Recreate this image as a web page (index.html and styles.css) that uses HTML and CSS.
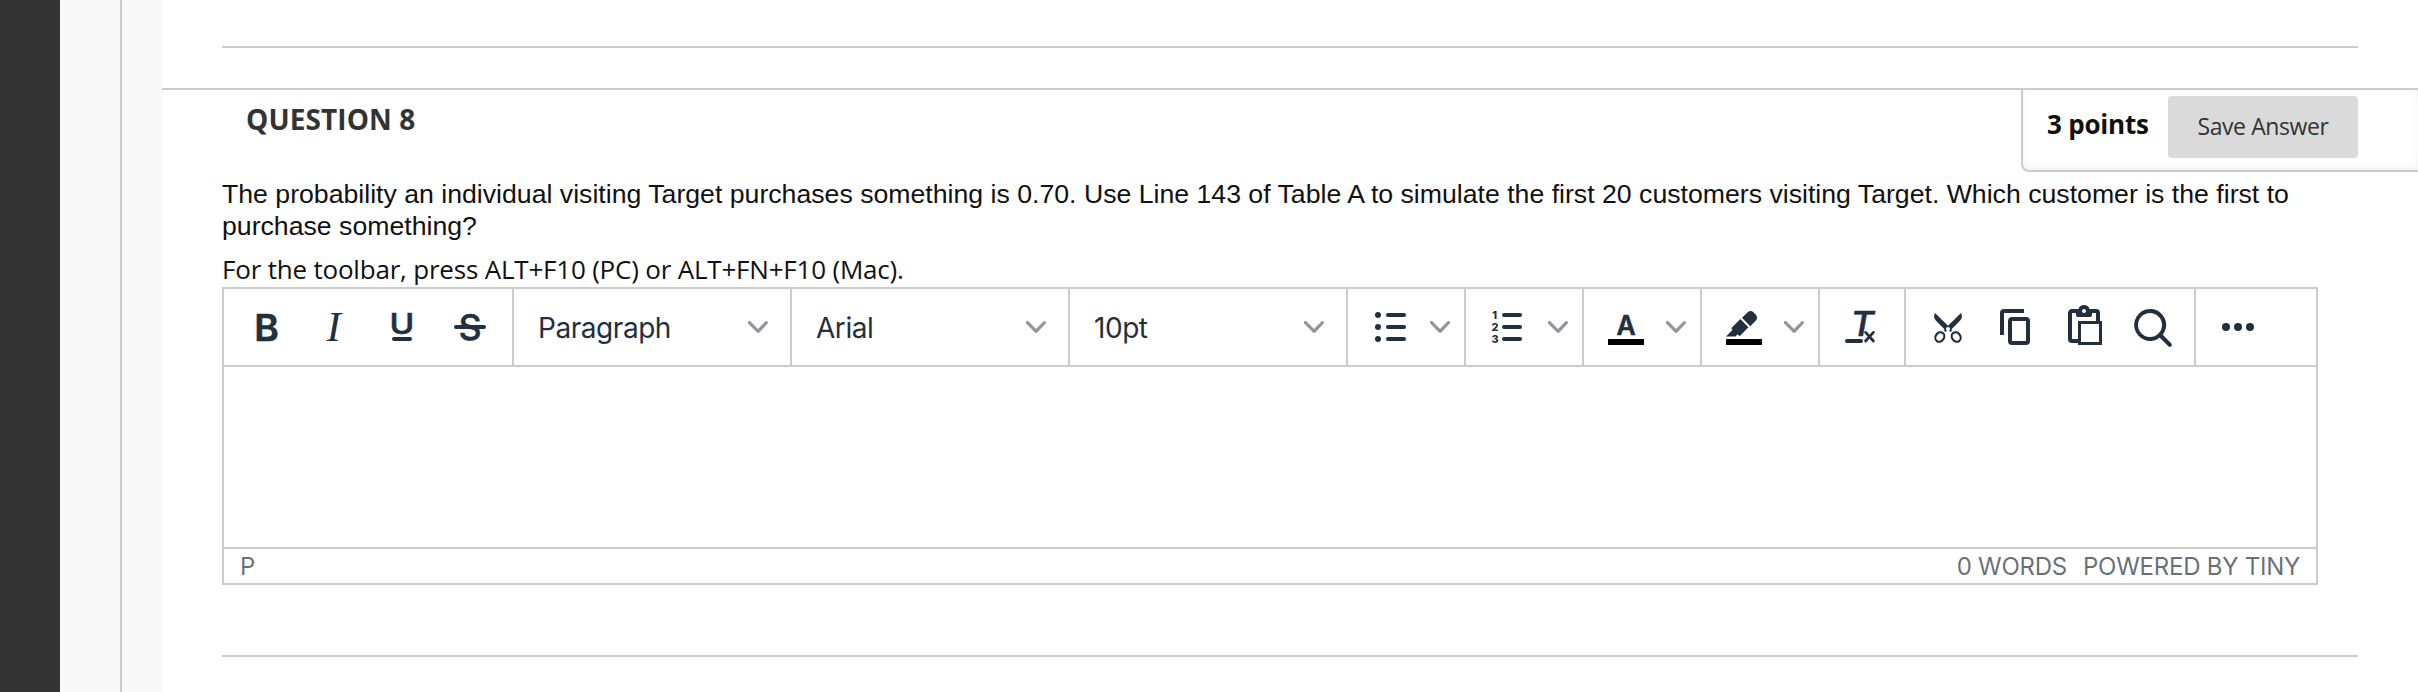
FILE: index.html
```
<!DOCTYPE html>
<html lang="en">
    <head>
        <meta charset="UTF-8">
        <meta name="viewport" content="width=device-width, initial-scale=1.0">
        <title>Take Test</title>
        <link rel="stylesheet" href="styles.css">
    </head>
    <body>
        <div class="page">
            <div class="side-dark"></div>
            <div class="side-light"></div>
            <div class="side-gap"></div>

            <div class="content">
                <hr class="divider divider-top">

                <div class="question">
                    <div class="question-header">
                        <h3>QUESTION 8</h3>
                        <div class="points-box">
                            <span class="points">3 points</span>
                            <button class="btn-save">Save Answer</button>
                        </div>
                    </div>

                    <p class="question-text">The probability an individual visiting Target purchases something is 0.70. Use Line 143 of Table A to simulate the first 20 customers visiting Target. Which customer is the first to<br>purchase something?</p>
                    <p class="toolbar-help">For the toolbar, press ALT+F10 (PC) or ALT+FN+F10 (Mac).</p>

                    <div class="editor">
                        <div class="toolbar">
                            <div class="group">
                                <button class="tool"><svg class="icon" viewBox="0 0 24 24"><text class="letter-b" x="6.1" y="18.8" textLength="12.3" lengthAdjust="spacingAndGlyphs">B</text></svg></button>
                                <button class="tool"><svg class="icon" viewBox="0 0 24 24"><text class="letter-i" x="8.2" y="19">I</text></svg></button>
                                <button class="tool"><svg class="icon" viewBox="0 0 24 24"><text class="letter-u" x="5.8" y="15.6" textLength="12.4" lengthAdjust="spacingAndGlyphs">U</text><rect x="7" y="17" width="10" height="2" rx="1"/></svg></button>
                                <button class="tool"><svg class="icon" viewBox="0 0 24 24"><text class="letter-s" x="6.2" y="18.6" textLength="11.6" lengthAdjust="spacingAndGlyphs">S</text><rect x="4" y="11" width="16" height="2" rx="1"/></svg></button>
                            </div>
                            <div class="group">
                                <button class="select"><span>Paragraph</span><svg class="chevron" viewBox="0 0 10 10"><path d="M8.7 2.2c.3-.3.8-.3 1 0 .4.4.4.9 0 1.2L5.7 7.8c-.3.3-.9.3-1.2 0L.2 3.4a.8.8 0 010-1.2c.3-.3.8-.3 1.1 0L5 6l3.7-3.8z"/></svg></button>
                            </div>
                            <div class="group">
                                <button class="select"><span>Arial</span><svg class="chevron" viewBox="0 0 10 10"><path d="M8.7 2.2c.3-.3.8-.3 1 0 .4.4.4.9 0 1.2L5.7 7.8c-.3.3-.9.3-1.2 0L.2 3.4a.8.8 0 010-1.2c.3-.3.8-.3 1.1 0L5 6l3.7-3.8z"/></svg></button>
                            </div>
                            <div class="group">
                                <button class="select"><span>10pt</span><svg class="chevron" viewBox="0 0 10 10"><path d="M8.7 2.2c.3-.3.8-.3 1 0 .4.4.4.9 0 1.2L5.7 7.8c-.3.3-.9.3-1.2 0L.2 3.4a.8.8 0 010-1.2c.3-.3.8-.3 1.1 0L5 6l3.7-3.8z"/></svg></button>
                            </div>
                            <div class="group">
                                <button class="tool"><svg class="icon" viewBox="0 0 24 24"><circle cx="6" cy="6" r="1.5"/><circle cx="6" cy="12" r="1.5"/><circle cx="6" cy="18" r="1.5"/><rect x="10" y="5" width="10" height="2" rx="1"/><rect x="10" y="11" width="10" height="2" rx="1"/><rect x="10" y="17" width="10" height="2" rx="1"/></svg></button>
                                <button class="arrow"><svg class="chevron" viewBox="0 0 10 10"><path d="M8.7 2.2c.3-.3.8-.3 1 0 .4.4.4.9 0 1.2L5.7 7.8c-.3.3-.9.3-1.2 0L.2 3.4a.8.8 0 010-1.2c.3-.3.8-.3 1.1 0L5 6l3.7-3.8z"/></svg></button>
                            </div>
                            <div class="group">
                                <button class="tool"><svg class="icon" viewBox="0 0 24 24"><text class="digit" x="4.1" y="8">1</text><text class="digit" x="3.7" y="14">2</text><text class="digit" x="3.7" y="20">3</text><rect x="9" y="5" width="10" height="2" rx="1"/><rect x="9" y="11" width="10" height="2" rx="1"/><rect x="9" y="17" width="10" height="2" rx="1"/></svg></button>
                                <button class="arrow"><svg class="chevron" viewBox="0 0 10 10"><path d="M8.7 2.2c.3-.3.8-.3 1 0 .4.4.4.9 0 1.2L5.7 7.8c-.3.3-.9.3-1.2 0L.2 3.4a.8.8 0 010-1.2c.3-.3.8-.3 1.1 0L5 6l3.7-3.8z"/></svg></button>
                            </div>
                            <div class="group">
                                <button class="tool"><svg class="icon" viewBox="0 0 24 24"><text class="letter-a" x="7.2" y="15.9" textLength="9.6" lengthAdjust="spacingAndGlyphs">A</text><rect class="swatch" x="3" y="18" width="18" height="3"/></svg></button>
                                <button class="arrow"><svg class="chevron" viewBox="0 0 10 10"><path d="M8.7 2.2c.3-.3.8-.3 1 0 .4.4.4.9 0 1.2L5.7 7.8c-.3.3-.9.3-1.2 0L.2 3.4a.8.8 0 010-1.2c.3-.3.8-.3 1.1 0L5 6l3.7-3.8z"/></svg></button>
                            </div>
                            <div class="group">
                                <button class="tool"><svg class="icon" viewBox="0 0 24 24"><path d="M7.7 16.7H3l3.3-3.3-.7-.8L10.2 8l4 4.1-4 4.2c-.2.2-.6.2-.8 0l-.6-.7-1.1 1.1zm3.3-9.3l3-2.9a2 2 0 012.6 0L18 6c.7.7.7 2 0 2.7l-2.9 2.9L11 7.4z"/><rect class="swatch" x="3" y="18" width="18" height="3"/></svg></button>
                                <button class="arrow"><svg class="chevron" viewBox="0 0 10 10"><path d="M8.7 2.2c.3-.3.8-.3 1 0 .4.4.4.9 0 1.2L5.7 7.8c-.3.3-.9.3-1.2 0L.2 3.4a.8.8 0 010-1.2c.3-.3.8-.3 1.1 0L5 6l3.7-3.8z"/></svg></button>
                            </div>
                            <div class="group">
                                <button class="tool"><svg class="icon" viewBox="0 0 24 24"><text class="letter-t" x="6.2" y="16.5" textLength="11.8" lengthAdjust="spacingAndGlyphs">T</text><rect x="3.500" y="18" width="9" height="2" rx="1"/><path class="line" d="M13.800 14.700l3.900 4.300M17.700 14.700l-3.900 4.300"/></svg></button>
                            </div>
                            <div class="group">
                                <button class="tool"><svg class="icon" viewBox="0 0 24 24"><path d="M5.500 5L12 11.400 18.500 5c.7 1.300.6 2.700-.4 3.800L14 12.900l-.4 1.600-1.600-.7-1.600.7-.4-1.600-4.100-4.100C4.900 7.700 4.800 6.300 5.500 5z"/><circle class="hole" cx="12" cy="13" r="1"/><ellipse class="ring" cx="7.900" cy="17" rx="2.100" ry="2.500" transform="rotate(35 7.900 17)"/><ellipse class="ring" cx="16.100" cy="17" rx="2.100" ry="2.500" transform="rotate(-35 16.100 17)"/></svg></button>
                                <button class="tool"><svg class="icon" viewBox="0 0 24 24"><path d="M16 3H6a2 2 0 00-2 2v11h2V5h10V3zm1 4a2 2 0 012 2v10a2 2 0 01-2 2h-7a2 2 0 01-2-2V9c0-1.200.9-2 2-2h7zm0 12V9h-7v10h7z"/></svg></button>
                                <button class="tool"><svg class="icon" viewBox="0 0 24 24"><path d="M18 9V5h-2v1c0 .6-.4 1-1 1H9a1 1 0 01-1-1V5H6v13h3V9h9zM9 20H6a2 2 0 01-2-2V5c0-1.100.9-2 2-2h3.200A3 3 0 0112 1a3 3 0 012.800 2H18a2 2 0 012 2v4h1v12H9v-1zm1.500-9.500v9h9v-9h-9zM12 3a1 1 0 00-1 1c0 .5.4 1 1 1s1-.5 1-1-.4-1-1-1z"/></svg></button>
                                <button class="tool"><svg class="icon" viewBox="0 0 24 24"><path d="M16 17.300a8 8 0 111.400-1.400l4.300 4.400a1 1 0 01-1.400 1.400l-4.400-4.300zm-5-.3a6 6 0 100-12 6 6 0 000 12z"/></svg></button>
                            </div>
                            <div class="group">
                                <button class="tool"><svg class="icon" viewBox="0 0 24 24"><circle cx="6" cy="12" r="2"/><circle cx="12" cy="12" r="2"/><circle cx="18" cy="12" r="2"/></svg></button>
                            </div>
                        </div>
                        <div class="edit-area"></div>
                        <div class="statusbar">
                            <span class="path">P</span>
                            <span class="words">0 words</span>
                            <span class="powered">Powered by Tiny</span>
                        </div>
                    </div>
                </div>

                <hr class="divider">
            </div>
        </div>
    </body>
</html>
```
FILE: styles.css
```
* {
    margin: 0;
    padding: 0;
    box-sizing: border-box;
}

body {
    background-color: #fff;
    font-family: "Open Sans", sans-serif;
    color: #111;
    overflow: hidden;
}

button {
    border: none;
    background: none;
    font-family: inherit;
    cursor: pointer;
}

.page {
    display: flex;
    height: 692px;
}

.side-dark {
    width: 60px;
    background-color: #333;
}

.side-light {
    width: 62px;
    background-color: #f8f8f8;
    border-right: 2px solid #ccc;
}

.side-gap {
    width: 40px;
    background-color: #f8f8f8;
}

.content {
    flex: 1;
}

.divider {
    height: 2px;
    border: none;
    background-color: #ccc;
    margin: 70px 60px 0;
}

.divider-top {
    margin: 46px 60px 40px;
}

.question {
    border-top: 2px solid #ccc;
}

.question-header {
    display: flex;
    justify-content: space-between;
    align-items: flex-start;
    height: 82px;
}

h3 {
    padding: 9px 0 0 84px;
    font-size: 28px;
    line-height: 40px;
    font-weight: bold;
    letter-spacing: 0.1px;
    color: #333;
}

.points-box {
    display: flex;
    align-items: flex-start;
    width: 397px;
    height: 82px;
    padding-left: 24px;
    border-left: 2px solid #ccc;
    border-bottom: 2px solid #ccc;
    border-bottom-left-radius: 8px;
    box-shadow: inset 0 -2px 10px rgba(0,0,0,0.05);
}

.points {
    width: 121px;
    padding-top: 16px;
    font-size: 26px;
    line-height: 36px;
    font-weight: bold;
    letter-spacing: -0.2px;
}

.btn-save {
    width: 190px;
    height: 62px;
    margin-top: 6px;
    padding-bottom: 2px;
    border-radius: 4px;
    background-color: #dadada;
    color: #333;
    font-size: 23px;
    letter-spacing: -0.4px;
}

.question-text {
    margin: 6px 0 9px 60px;
    font-family: "Liberation Sans", Arial, sans-serif;
    font-size: 26.67px;
    line-height: 32px;
    white-space: nowrap;
}

.toolbar-help {
    margin-left: 60px;
    font-size: 26px;
    line-height: 36px;
    letter-spacing: -0.2px;
}

.editor {
    width: 2096px;
    margin-left: 60px;
    border: 2px solid #ccc;
    font-family: Inter, sans-serif;
    color: #222f3e;
}

.toolbar {
    display: flex;
    height: 78px;
    border-bottom: 2px solid #ccc;
}

.group {
    display: flex;
    align-items: center;
    padding: 0 8px;
    border-right: 2px solid #ccc;
}

.group:last-child {
    border-right: none;
}

.tool {
    display: flex;
    justify-content: center;
    align-items: center;
    width: 68px;
    height: 68px;
}

.arrow {
    display: flex;
    padding-left: 6px;
    width: 32px;
}

.select {
    display: flex;
    justify-content: space-between;
    align-items: center;
    width: 260px;
    height: 68px;
    padding: 0 14px 0 16px;
    font-size: 28px;
    letter-spacing: -0.45px;
    color: #222f3e;
}

.select span {
    padding-top: 2px;
}

.icon {
    width: 48px;
    height: 48px;
    fill: #222f3e;
}

.chevron {
    width: 20px;
    height: 20px;
    fill: #222f3e;
    opacity: 0.5;
}

.letter-b {
    font-size: 18.7px;
    font-weight: 600;
    stroke: #222f3e;
    stroke-width: 0.3;
    stroke-linejoin: round;
}

.letter-i {
    font-family: "Liberation Serif", serif;
    font-size: 21.5px;
    font-style: italic;
}

.letter-u {
    font-size: 14px;
    font-weight: 500;
    stroke: #222f3e;
    stroke-width: 0.3;
    stroke-linejoin: round;
}

.letter-s {
    font-size: 17.8px;
    font-weight: 500;
    stroke: #222f3e;
    stroke-width: 0.2;
    stroke-linejoin: round;
}

.letter-a {
    font-size: 13.4px;
    font-weight: 600;
    stroke: #222f3e;
    stroke-width: 0.3;
    stroke-linejoin: round;
}

.letter-t {
    font-size: 17px;
    font-weight: 500;
    font-style: italic;
    stroke: #222f3e;
    stroke-width: 0.3;
    stroke-linejoin: round;
}

.digit {
    font-size: 5.4px;
    font-weight: 800;
}

.swatch {
    fill: #000;
}

.line {
    fill: none;
    stroke: #222f3e;
    stroke-width: 1.4;
    stroke-linecap: round;
}

.ring {
    fill: none;
    stroke: #222f3e;
    stroke-width: 1.1;
}

.hole {
    fill: #fff;
}

.edit-area {
    height: 180px;
}

.statusbar {
    display: flex;
    align-items: center;
    height: 36px;
    padding: 1px 16px 0;
    border-top: 2px solid #ccc;
    font-size: 24px;
    letter-spacing: -0.25px;
    color: rgba(34,47,62,0.7);
    text-transform: uppercase;
}

.words {
    margin-left: auto;
}

.powered {
    margin-left: 16px;
}
```
